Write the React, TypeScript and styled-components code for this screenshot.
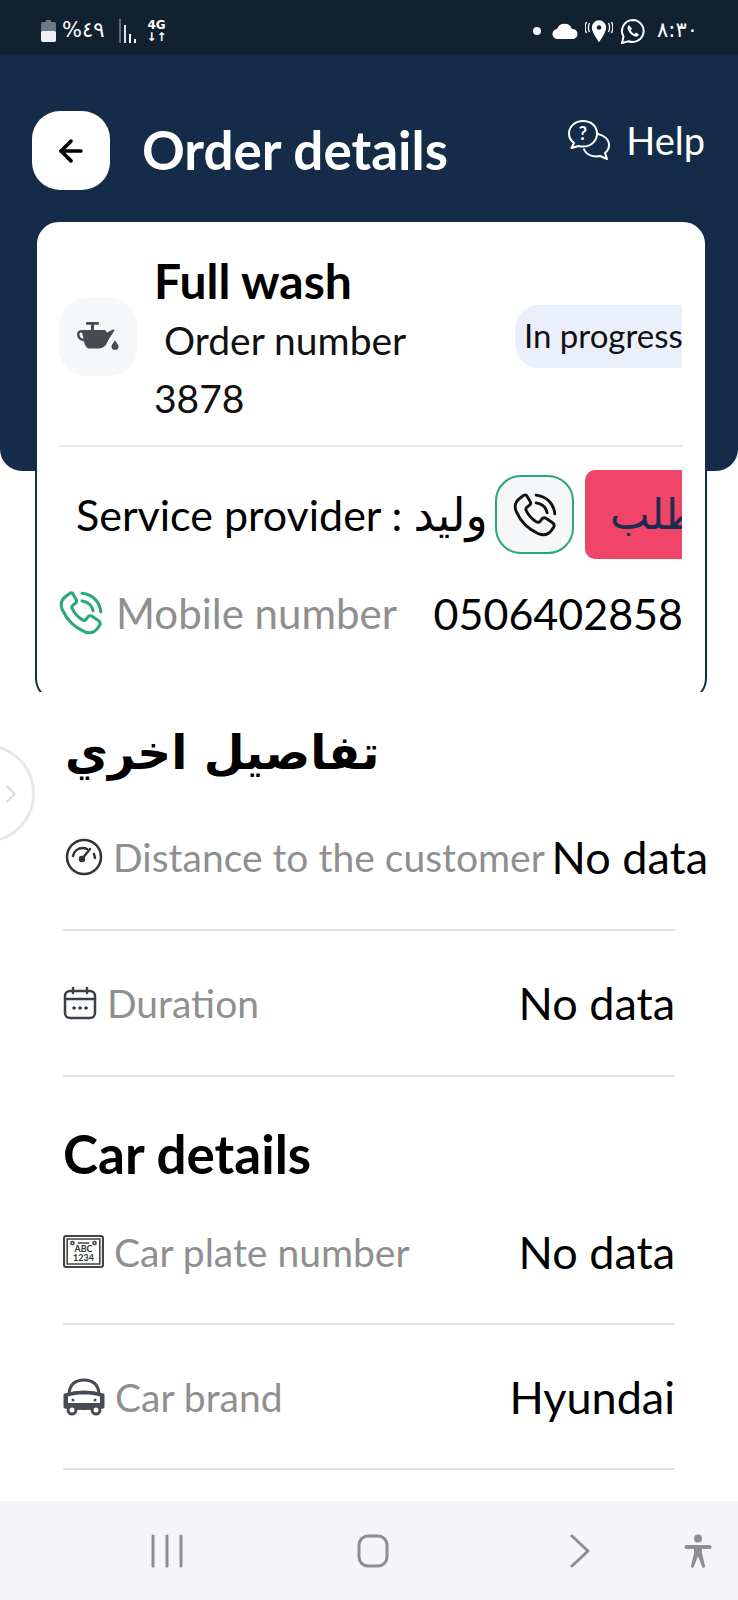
import React from "react";
import styled, { createGlobalStyle } from "styled-components";
import { ArrowLeft, ChevronRight } from "lucide-react";

const Global = createGlobalStyle`
  html, body { margin: 0; padding: 0; background: #fff; }
  body { font-family: Lato, "DejaVu Sans", sans-serif; }
  * { box-sizing: border-box; }
`;

const Page = styled.div`
  width: 738px; height: 1600px; overflow: hidden; display: flex; flex-direction: column; background: #fff; color: #000;
`;
const StatusBar = styled.div`
  height: 54px; flex: none; background: #11212f; color: #fff; display: flex; justify-content: space-between; align-items: center; padding: 7px 40px 0 41px;
`;
const StatusGroup = styled.div`
  display: flex; align-items: center; gap: ${p => p.$gap ?? 6}px; font-size: ${p => p.$size ?? 21}px; line-height: 1; font-family: "DejaVu Sans", sans-serif;
`;
const Net = styled.span`
  display: flex; flex-direction: column; align-items: center; font-size: 12px; font-weight: 700; line-height: 12px; margin-left: 4px;
`;
const Header = styled.header`
  height: 417px; flex: none; background: #142c48; border-radius: 0 0 22px 22px; padding: 57px 33px 0 32px; display: flex; align-items: flex-start;
`;
const BackButton = styled.div`
  width: 78px; height: 79px; border-radius: 28px; background: #fff; color: #000; display: flex; align-items: center; justify-content: center; flex: none;
`;
const Title = styled.h1`
  margin: 0 0 0 32px; height: 79px; line-height: 77px; font-size: 53px; font-weight: 700; color: #fff; flex: 1; white-space: nowrap;
`;
const Help = styled.div`
  display: flex; align-items: center; gap: 15px; color: #fff; font-size: 38px; height: 58px;
`;
const CardClip = styled.div`
  margin: -251px 31px 0 35px; height: 472px; flex: none; overflow: hidden; position: relative;
`;
const Card = styled.section`
  height: 482px; background: #fff; border: 2px solid #142c48; border-radius: 24px; padding: 0 22px;
`;
const CardInner = styled.div`
  overflow: hidden; height: 100%;
`;
const TopRow = styled.div`
  height: 225px; display: flex; align-items: center; border-bottom: 2px solid #e8e8e8;
`;
const OilBox = styled.div`
  width: 78px; height: 78px; flex: none; border-radius: 28px; background: #f5f7f9; display: flex; align-items: center; justify-content: center; margin-top: 6px;
`;
const OrderInfo = styled.div`
  margin: 10px 0 0 17px; flex: none; width: 361px; display: flex; flex-direction: column;
`;
const FullWash = styled.div`
  font-size: 48px; font-weight: 700; line-height: 60px;
`;
const OrderNum = styled.div`
  font-size: 39px; line-height: 59px; padding-left: 10px; color: #111;
`;
const OrderId = styled.div`
  font-size: 39px; line-height: 56px; color: #111;
`;
const Pill = styled.div`
  width: 167px; height: 63px; flex: none; border-radius: 24px 0 0 24px; background: #ebeffb; white-space: nowrap; overflow: hidden; font-size: 33px; line-height: 60px; padding-left: 9px; color: #111; margin-top: 6px;
`;
const ProviderRow = styled.div`
  display: flex; align-items: center; height: 113px; padding-left: 17px; margin-top: 11px;
`;
const Provider = styled.div`
  font-size: 43px; white-space: nowrap; width: 419px; flex: none;
`;
const ProviderName = styled.span`
  font-size: 46px; font-family: "DejaVu Sans", sans-serif;
`;
const CallButton = styled.div`
  width: 79px; height: 79px; flex: none; border: 2px solid #2aa876; border-radius: 26px; background: #f5f7f9; display: flex; align-items: center; justify-content: center;
`;
const CancelButton = styled.div`
  margin-left: 11px; width: 97px; height: 89px; flex: none; overflow: hidden; border-radius: 10px 0 0 10px; background: #f04468; color: #1e2b50; font-family: "DejaVu Sans", sans-serif; font-size: 42px; line-height: 89px; white-space: nowrap; padding-left: 25px; display: flex;
`;
const CancelText = styled.span`
  flex: none; direction: rtl;
`;
const MobileRow = styled.div`
  display: flex; align-items: center; height: 60px; margin-top: 12px;
`;
const Label = styled.span`
  color: #8f8f8f; font-size: ${p => p.$size ?? 39}px; white-space: nowrap; margin-left: ${p => p.$offset ?? 0}px;
`;
const Value = styled.span`
  margin-left: auto; font-size: ${p => p.$size ?? 45}px; white-space: nowrap; color: #000;
`;
const Details = styled.main`
  flex: 1; position: relative; padding: 0 63px; min-height: 0;
`;
const SideHandle = styled.div`
  position: absolute; left: -64px; top: 52px; width: 99px; height: 99px; border-radius: 50%; border: 3px solid #e8e8e8; display: flex; align-items: center; justify-content: flex-end; color: #d8d8d8; padding-right: 6px;
`;
const ArabicHeading = styled.h2`
  margin: 0; height: 93px; padding: 29px 0 0 2px; font-size: 47px; line-height: 64px; font-weight: 700; font-family: "DejaVu Sans", sans-serif;
`;
const Row = styled.div`
  height: ${p => p.$height ?? 145}px; display: flex; align-items: center; border-bottom: 2px solid #e2e2e2; gap: 10px; position: relative;
`;
const RowList = styled.div`
  display: flex; flex-direction: column;
`;
const OverValue = styled.span`
  position: absolute; right: -33px; font-size: 45px; white-space: nowrap;
`;
const CarHeading = styled.h2`
  margin: 0; padding-top: 47px; height: 103px; font-size: 53px; line-height: 60px; font-weight: 700;
`;
const NavBar = styled.nav`
  height: 99px; flex: none; background: #f5f5f7; display: grid; grid-template-columns: 206px 213px 114px auto; padding-left: 151px; align-items: center;
`;

const HelpIcon = () => (
  <svg width="44" height="42" viewBox="0 0 44 42" fill="none" stroke="#fff" strokeWidth="2" strokeLinejoin="round" strokeLinecap="round">
    <path d="M16 2C8 2 2 7.500 2 14.500c0 4 2 7.300 5 9.500l-2.500 5 7-2c1.500.4 3 .6 4.500.6 8 0 14-5.600 14-13.100S24 2 16 2z" />
    <path d="M31 15c6 1.500 11 5.500 11 11 0 3.200-1.500 6-4 8l2 6-7-3c-1 .3-2.500.4-4 .4-5.500 0-10-2.700-12-7" />
    <text x="16" y="21" fontSize="18" fontWeight="700" textAnchor="middle" fill="#fff" stroke="none" fontFamily="Lato">?</text>
  </svg>
);
const OilIcon = () => (
  <svg width="42" height="30" viewBox="0 0 42 34" preserveAspectRatio="none" fill="#464b52">
    <rect x="9" y="0" width="13" height="3" rx="1" />
    <rect x="14" y="2" width="3" height="7" />
    <path d="M5 9h23l2 3 6-3.500c1-.5 2 .5 1.300 1.500L31 21c-1.500 5-4 9-9 9h-9c-4 0-5-4-6-8-4-.5-7-3.500-7-8 0-3.500 2-5 5-5zm0 3c-2 0-2.500 1-2.500 2.500 0 2 1.500 4 4 4.500z" fillRule="evenodd" />
    <path d="M38 21c2 3 3.500 5 3.500 7a3.500 3.500 0 0 1-7 0c0-2 1.500-4 3.500-7z" />
  </svg>
);
const HandsetIcon = ({ color, size = 44, sw = 2.4 }: { color: string; size?: number; sw?: number }) => (
  <svg width={size} height={size} viewBox="3 2 40 40" fill="none" stroke={color} strokeWidth={sw} strokeLinecap="round" strokeLinejoin="round">
    <path d="M13 4L9 7C5 10 4 14 6 19C10 28 17 35 26 39C31 41 35 40 38 36L40 33C41 31 40.500 30 39 29L33 25C31.500 24 30 24.500 29 26L27.500 28C26.500 29 25.500 29 24 28C20 25.500 17 22 15 18C14.500 17 14.500 16 15.500 15L17.500 13.500C19 12.500 19.500 11 18.500 9.500L15.500 4.500C15 3.500 14 3.500 13 4Z" />
    <path d="M24 11C30 12 33 15 34 20" />
    <path d="M24 4C33 5 40 11 41 21" />
  </svg>
);
const GaugeIcon = () => (
  <svg width="38" height="38" viewBox="0 0 38 38" fill="none" stroke="#333" strokeWidth="2.500" strokeLinecap="round" style={{ marginLeft: 2 }}>
    <circle cx="19" cy="19" r="17" />
    <path d="M8 18c1-5 5-8 10-8 2 0 3 .4 4 1" />
    <path d="M17 21l8-10" />
    <circle cx="17" cy="21" r="2" fill="#333" />
    <path d="M29 16l1 4" />
  </svg>
);
const CalendarIcon = () => (
  <svg width="34" height="34" viewBox="0 0 34 34" fill="none" stroke="#3c4148" strokeWidth="2.500" strokeLinecap="round">
    <rect x="2" y="5" width="30" height="27" rx="5" />
    <path d="M2 13h30M10 2v5M24 2v5" />
    <circle cx="11" cy="22" r="1.300" fill="#3c4148" strokeWidth="1" />
    <circle cx="17" cy="22" r="1.300" fill="#3c4148" strokeWidth="1" />
    <circle cx="23" cy="22" r="1.300" fill="#3c4148" strokeWidth="1" />
  </svg>
);
const PlateIcon = () => (
  <svg width="41" height="33" viewBox="0 0 39 33" preserveAspectRatio="none" fill="none" stroke="#444" strokeWidth="1.500">
    <rect x="1" y="1" width="37" height="31" rx="2" strokeWidth="2" />
    <rect x="4" y="4" width="31" height="25" />
    <circle cx="9" cy="8" r="1.500" />
    <circle cx="30" cy="8" r="1.500" />
    <path d="M14 8h11" />
    <text x="19.500" y="17" fontSize="8.500" textAnchor="middle" fill="#333" stroke="none" fontFamily="Lato" fontWeight="700">ABC</text>
    <text x="19.500" y="26" fontSize="8.500" textAnchor="middle" fill="#333" stroke="none" fontFamily="Lato" fontWeight="700">1234</text>
  </svg>
);
const CarIcon = () => (
  <svg width="42" height="38" viewBox="0 0 42 38" fill="none" stroke="#464b52" strokeWidth="3" strokeLinejoin="round">
    <path d="M6 15c1-8 5-13 15-13s14 5 15 13" />
    <path d="M2 17c6-2 12-3 19-3s13 1 19 3v12c-6 1-12 1.500-19 1.500S8 30 2 29z" fill="#464b52" />
    <path d="M5 18.500c5-1.500 10-2 16-2s11 .5 16 2V25H5z" fill="#fff" stroke="none" />
    <circle cx="10" cy="22" r="1.500" fill="#464b52" stroke="none" />
    <circle cx="32" cy="22" r="1.500" fill="#464b52" stroke="none" />
    <circle cx="9" cy="32" r="4" fill="#fff" />
    <circle cx="33" cy="32" r="4" fill="#fff" />
  </svg>
);
const NavIcon = ({ children, w = 32 }: { children: React.ReactNode; w?: number }) => (
  <svg width={w} height="34" viewBox={`0 0 ${w} 34`} fill="none" stroke="#8e8e90" strokeWidth="3" strokeLinecap="round" strokeLinejoin="round">{children}</svg>
);

export default function App() {
  return (
    <Page>
      <Global />
      <StatusBar>
        <StatusGroup $gap={6}>
          <svg width="15" height="22" viewBox="0 0 15 22"><rect x="0" y="2" width="15" height="20" rx="2" fill="#6d7a85" /><rect x="0" y="11" width="15" height="11" rx="2" fill="#eef0f2" /><rect x="5" y="0" width="5" height="3" fill="#6d7a85" /></svg>
          <span>%٤٩</span>
          <svg width="18" height="26" viewBox="0 0 18 26" style={{ marginLeft: 8 }}><rect x="0" y="1" width="2" height="24" fill="#5f6c78" /><rect x="5" y="7" width="2" height="18" fill="#dfe3e6" /><rect x="10" y="16" width="2" height="9" fill="#fff" /><rect x="15" y="21" width="2" height="4" fill="#fff" /></svg>
          <Net><span>4G</span><span>↓↑</span></Net>
        </StatusGroup>
        <StatusGroup $gap={7}>
          <svg width="10" height="10"><circle cx="5" cy="5" r="4" fill="#f2f2f2" /></svg>
          <svg width="26" height="18" viewBox="0 0 26 18" style={{ marginLeft: 3 }}><path d="M6 17a5 5 0 0 1-1-10 8 8 0 0 1 15 0 5 5 0 0 1 1 10z" fill="#fff" /></svg>
          <svg width="28" height="24" viewBox="0 0 28 24" fill="none" stroke="#fff" strokeWidth="1.300"><path d="M14 2a6.500 6.500 0 0 0-6.500 6.500C7.500 13 14 22 14 22s6.500-9 6.500-13.500A6.500 6.500 0 0 0 14 2z" fill="#fff" /><circle cx="14" cy="8.500" r="2.300" fill="#11212f" stroke="none" /><path d="M4.500 4c-1.500 3-1.500 6 0 9M1.500 3c-2 4-2 7 0 11M23.500 4c1.500 3 1.500 6 0 9M26.500 3c2 4 2 7 0 11" /></svg>
          <svg width="26" height="26" viewBox="0 0 26 26" fill="none" stroke="#fff" strokeWidth="2"><path d="M13 2a11 11 0 0 0-9.500 16.500L2 25l6.500-1.800A11 11 0 1 0 13 2z" /><path d="M9 7c-1.500 1-2 3-1 5 1.500 3 4 5.500 7 6.500 2 .5 3.500-.5 4-2l-3-2-1.500 1.500c-1.500-.7-3-2.200-3.800-3.800L12 10.500z" fill="#fff" stroke="none" /></svg>
          <span style={{ marginLeft: 4 }}>٨:٣٠</span>
        </StatusGroup>
      </StatusBar>
      <Header>
        <BackButton><ArrowLeft size={34} strokeWidth={2.6} /></BackButton>
        <Title>Order details</Title>
        <Help><HelpIcon /><span>Help</span></Help>
      </Header>
      <CardClip>
        <Card>
          <CardInner>
            <TopRow>
              <OilBox><OilIcon /></OilBox>
              <OrderInfo>
                <FullWash>Full wash</FullWash>
                <OrderNum>Order number</OrderNum>
                <OrderId>3878</OrderId>
              </OrderInfo>
              <Pill>In progress</Pill>
            </TopRow>
            <ProviderRow>
              <Provider>Service provider : <ProviderName>وليد</ProviderName></Provider>
              <CallButton><HandsetIcon color="#111" sw={2.6} /></CallButton>
              <CancelButton><CancelText>إلغاء طلب</CancelText></CancelButton>
            </ProviderRow>
            <MobileRow>
              <HandsetIcon color="#2aa876" sw={2.8} />
              <Label $size={42} $offset={13}>Mobile number</Label>
              <Value $size={43}>0506402858</Value>
            </MobileRow>
          </CardInner>
        </Card>
      </CardClip>
      <Details>
        <SideHandle><ChevronRight size={30} strokeWidth={1.6} /></SideHandle>
        <ArabicHeading>تفاصيل اخري</ArabicHeading>
        <RowList>
          <Row $height={146}><GaugeIcon /><Label>Distance to the customer</Label><OverValue>No data</OverValue></Row>
          <Row $height={146}><CalendarIcon /><Label>Duration</Label><Value>No data</Value></Row>
          <CarHeading>Car details</CarHeading>
          <Row><PlateIcon /><Label>Car plate number</Label><Value>No data</Value></Row>
          <Row><CarIcon /><Label>Car brand</Label><Value>Hyundai</Value></Row>
        </RowList>
      </Details>
      <NavBar>
        <NavIcon><path d="M2 2v30M16 2v30M30 2v30" /></NavIcon>
        <NavIcon><rect x="2" y="2" width="28" height="30" rx="9" /></NavIcon>
        <NavIcon w={20}><path d="M2 2l16 15L2 32" /></NavIcon>
        <svg width="28" height="34" viewBox="0 0 28 34" fill="#8e8e90"><circle cx="14" cy="4.500" r="4" /><path d="M2 11h24c2 0 2 4 0 4h-8v4l3 13c.3 2-2.500 2.500-3 .5L14 22l-4 10.500c-.5 2-3.300 1.500-3-.5l3-13v-4H2c-2 0-2-4 0-4z" /></svg>
      </NavBar>
    </Page>
  );
}
